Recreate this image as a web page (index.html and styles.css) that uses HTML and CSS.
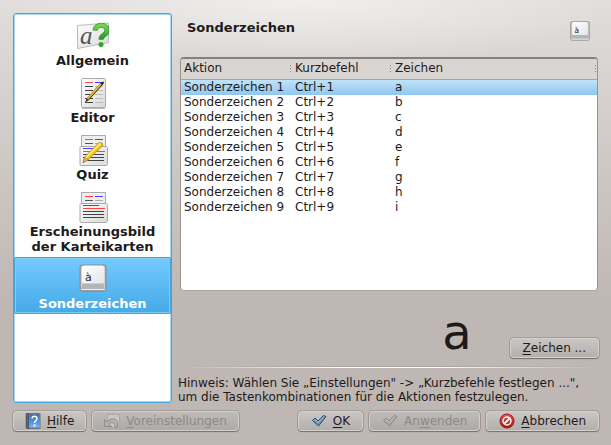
FILE: index.html
```html
<!DOCTYPE html>
<html lang="de">
<head>
<meta charset="utf-8">
<title>Einrichten</title>
<link rel="stylesheet" href="styles.css">
</head>
<body>
<svg class="defs" width="0" height="0" aria-hidden="true">
  <defs>
    <linearGradient id="paper" x2="1" y2="1"><stop stop-color="#fff"/><stop offset="1" stop-color="#d9d9d9"/></linearGradient>
    <linearGradient id="green" x2="0" y2="1"><stop stop-color="#75d353"/><stop offset="1" stop-color="#189b1c"/></linearGradient>
    <linearGradient id="blue" x2="0" y2="1"><stop stop-color="#2468bd"/><stop offset="1" stop-color="#79b5f8"/></linearGradient>
    <linearGradient id="red" x2="0" y2="1"><stop stop-color="#e85a50"/><stop offset="1" stop-color="#a90d0d"/></linearGradient>
    <linearGradient id="keyface" x2="1" y2="1"><stop stop-color="#fff"/><stop offset="1" stop-color="#e4e5e6"/></linearGradient>
    <symbol id="cards" viewBox="0 0 32 32">
      <path d="M4.500 .5h24v13h-24z" fill="#eee" stroke="#aaa"/>
      <path d="M8 4.500h8" stroke="#f44"/><path d="M18 4.500h8" stroke="#44f"/>
      <path d="M8 8.500h8" stroke="#555"/><path d="M18 8.500h8" stroke="#aaa"/>
      <path d="M3.500 11.500h26l1 1v17l-1 1h-26l-.5-1v-17z" fill="url(#paper)" stroke="#aaa"/>
      <path d="M6 13.500h16" stroke="#44e"/><path d="M6 16.500h22" stroke="#f44"/>
      <path d="M6 19.500h21M6 22.500h21M6 25.500h21" stroke="#444"/>
    </symbol>
    <symbol id="key" viewBox="0 0 28 28">
      <rect x="1" y="1" width="26" height="26" rx="2" fill="#a8aaac" stroke="#8a8a8a"/>
      <path d="M2 26V3l1-1h22l1 1v23z" fill="#d2d4d6"/>
      <path d="M4 19h20l2 6H2z" fill="#b0b5ba"/>
      <rect x="3" y="1.500" width="22" height="18" rx="2" fill="url(#keyface)"/>
      <path d="M2 25.500h24" stroke="#eee"/>
      <text x="6" y="17" font-family="DejaVu Sans" font-size="11" font-weight="normal" fill="#222">à</text>
    </symbol>
    <symbol id="check" viewBox="0 0 16 16">
      <path d="M1.500 7.500 4 5l3 3 5.500-5.500L15 3.500 7.500 13z" stroke-linejoin="round"/>
      <path d="M3 7.500l1-1 3 3 6-6" fill="none" class="shine"/>
    </symbol>
  </defs>
</svg>
<main class="main">
  <nav class="nav">
    <a class="item" href="#allgemein">
      <svg class="icon" viewBox="0 0 32 32" aria-hidden="true">
        <path d="M.5 4.500 31.500 2v19.500L.5 27.500z" fill="url(#paper)" stroke="#bbb"/>
        <text x="3" y="23" font-family="Liberation Serif" font-style="italic" font-weight="normal" font-size="25" fill="#555">a</text>
        <path d="M18 9.500c1-7 12-7 12 0 0 5-6 4-6 9" fill="none" stroke="#278d20" stroke-width="5"/>
        <path d="M18 9.500c1-7 12-7 12 0 0 5-6 4-6 9" fill="none" stroke="url(#green)" stroke-width="4"/>
        <circle cx="24" cy="23.500" r="2.500" fill="#2ba52b"/>
      </svg>
      <span>Allgemein</span>
    </a>
    <a class="item" href="#editor">
      <svg class="icon" viewBox="0 0 32 32" aria-hidden="true">
        <rect x="4.500" y=".5" width="24" height="29" rx="1" fill="url(#paper)" stroke="#aaa"/>
        <path d="M5 30.500h23" stroke="#bbb"/>
        <path d="M8 4.500h8" stroke="#f44"/><path d="M18 4.500h8" stroke="#44e"/>
        <path d="M8 8.500h8M8 12.500h8M8 16.500h8M8 20.500h8M8 24.500h8" stroke="#444"/>
        <path d="M18 8.500h8M18 12.500h8M18 16.500h8M18 20.500h8M18 24.500h8" stroke="#bbb"/>
        <path d="M8 24.500 10 20 24 4.500l2.500-1 .5 1-1 2L12 22z" fill="#2b2613"/>
        <path d="M10.500 21 24 6" stroke="#e3b63c" stroke-width="2"/>
      </svg>
      <span>Editor</span>
    </a>
    <a class="item" href="#quiz">
      <svg class="icon" viewBox="0 0 32 32" aria-hidden="true">
        <use href="#cards"/>
        <path d="M6 27.500 7.500 22 22 7.500q3-1 4 3L11 25z" fill="#f3bd18" stroke="#b9820c" stroke-width=".7"/>
        <path d="M9 22.500 23.500 8.500" stroke="#ffe95c" stroke-width="2"/>
        <path d="M6 27.500 7.500 22l3.500 3z" fill="#d8b78e" stroke="#8a6a44" stroke-width=".5"/>
      </svg>
      <span>Quiz</span>
    </a>
    <a class="item" href="#karten">
      <svg class="icon" viewBox="0 0 32 32" aria-hidden="true"><use href="#cards"/></svg>
      <span>Erscheinungsbild<br>der Karteikarten</span>
    </a>
    <a class="item selected" href="#sonderzeichen" aria-current="page">
      <svg class="icon keycap" viewBox="0 0 28 28" aria-hidden="true"><use href="#key"/></svg>
      <span>Sonderzeichen</span>
    </a>
  </nav>
  <section class="page">
    <header class="head">
      <h1>Sonderzeichen</h1>
      <svg class="headkey" viewBox="0 0 28 28" aria-hidden="true"><use href="#key"/></svg>
    </header>
    <div class="frame">
      <table>
        <thead><tr><th class="action">Aktion</th><th class="shortcut">Kurzbefehl</th><th>Zeichen</th></tr></thead>
        <tbody>
          <tr class="current"><td>Sonderzeichen 1</td><td>Ctrl+1</td><td>a</td></tr>
          <tr><td>Sonderzeichen 2</td><td>Ctrl+2</td><td>b</td></tr>
          <tr><td>Sonderzeichen 3</td><td>Ctrl+3</td><td>c</td></tr>
          <tr><td>Sonderzeichen 4</td><td>Ctrl+4</td><td>d</td></tr>
          <tr><td>Sonderzeichen 5</td><td>Ctrl+5</td><td>e</td></tr>
          <tr><td>Sonderzeichen 6</td><td>Ctrl+6</td><td>f</td></tr>
          <tr><td>Sonderzeichen 7</td><td>Ctrl+7</td><td>g</td></tr>
          <tr><td>Sonderzeichen 8</td><td>Ctrl+8</td><td>h</td></tr>
          <tr><td>Sonderzeichen 9</td><td>Ctrl+9</td><td>i</td></tr>
        </tbody>
      </table>
    </div>
    <div class="choose">
      <output class="preview">a</output>
      <button type="button"><span><u>Z</u>eichen ...</span></button>
    </div>
    <hr>
    <p class="hint">Hinweis: Wählen Sie „Einstellungen" -&gt; „Kurzbefehle festlegen ...",<br>um die Tastenkombinationen für die Aktionen festzulegen.</p>
  </section>
</main>
<footer class="buttons">
  <button type="button">
    <svg class="small" viewBox="0 0 16 16" aria-hidden="true">
      <path d="M1 0h14v16H2L1 15z" fill="#17283f"/><path d="M4 1h11v14H4z" fill="url(#blue)"/><path d="M2.500 1v14" stroke="#4c6788"/>
      <path d="M7 5.500c0-3 5-3 5 0 0 2-2.500 2-2.500 4.500" fill="none" stroke="#fff" stroke-width="1.500"/><path d="M8.500 11.500h2v2h-2z" fill="#fff" stroke="none"/>
    </svg>
    <span><u>H</u>ilfe</span>
  </button>
  <button type="button" disabled>
    <svg class="small" viewBox="0 0 16 16" aria-hidden="true">
      <path d="M3.500 1.500h12v9l-3 4h-9z" fill="#c9c7c5" stroke="#aaa8a6"/>
      <path d="M.5 6.500v7h7L5 11c3-3 6-1 6 3l2 .5c3-9-5-11-10-5.500z" fill="#b5b3b1" stroke="#8f8d8b"/>
    </svg>
    <span><u>V</u>oreinstellungen</span>
  </button>
  <span class="space"></span>
  <button type="button" class="ok"><svg class="small" viewBox="0 0 16 16" aria-hidden="true"><use href="#check"/></svg><span><u>O</u>K</span></button>
  <button type="button" disabled><svg class="small" viewBox="0 0 16 16" aria-hidden="true"><use href="#check"/></svg><span>An<u>w</u>enden</span></button>
  <button type="button">
    <svg class="small" viewBox="0 0 16 16" aria-hidden="true">
      <circle cx="8" cy="8" r="7" fill="url(#red)" stroke="#a01515"/>
      <circle cx="8" cy="8" r="4" fill="none" stroke="#eee" stroke-width="1.500"/><path d="m5 11 6-6" stroke="#eee" stroke-width="2"/>
    </svg>
    <span><u>A</u>bbrechen</span>
  </button>
</footer>
</body>
</html>
```
FILE: styles.css
```css
* { box-sizing: border-box; }

body {
  margin: 0;
  min-height: 100vh;
  padding: 13px 12px 14px 13px;
  display: flex;
  flex-direction: column;
  gap: 8px;
  font: 12px/15px "DejaVu Sans", sans-serif;
  color: #1e1a1a;
  background:
    radial-gradient(ellipse 320px 64px at 50% 0, #f0efee, rgba(240, 239, 238, 0)),
    linear-gradient(#e0dddb, #bfb7b3 300px);
}

.defs { position: absolute; }

.main {
  flex: 1;
  display: flex;
  gap: 6px;
}

.nav {
  width: 159px;
  border: 1px solid #43a5dc;
  border-radius: 3px;
  background: #fff;
  box-shadow: inset 0 0 0 1px #a5d9f5;
}

.item {
  display: flex;
  flex-direction: column;
  align-items: center;
  padding: 7px 0 3px;
  color: #1e1a1a;
  font-size: 13px;
  font-weight: bold;
  text-align: center;
  text-decoration: none;
}

.item.selected {
  color: #fff;
  background: linear-gradient(#76caff, #43a9e6);
  border-radius: 2px;
  box-shadow: inset 0 0 0 1px #43a5dc, inset 0 0 0 2px #7fcbf8;
}

.icon {
  width: 32px;
  height: 32px;
}

.keycap { padding: 0 2px 4px; }

.page {
  flex: 1;
  min-width: 0;
  display: flex;
  flex-direction: column;
}

.head {
  display: flex;
  justify-content: space-between;
  padding: 7px 9px 0;
  height: 44px;
}

h1 {
  margin: 0;
  font-size: 13px;
  line-height: 15px;
}

.headkey {
  width: 20px;
  height: 20px;
  margin-top: 1px;
}

.frame {
  flex: 1;
  margin: 0 1px 0 2px;
  border: 1px solid #99928e;
  border-top: 2px solid #85807c;
  border-bottom-color: #aaa39f;
  border-radius: 4px;
  background: #fff;
  overflow: hidden;
}

table {
  width: 100%;
  table-layout: fixed;
  border-collapse: collapse;
}

.action { width: 111px; }
.shortcut { width: 100px; }

th, td {
  padding: 0 0 0 3px;
  height: 15px;
  text-align: left;
  font-weight: normal;
  white-space: nowrap;
}

th {
  height: 20px;
  background:
    linear-gradient(#8b8683, #8b8683) right 1px top 6px / 1px 1px no-repeat,
    linear-gradient(#8b8683, #8b8683) right 1px top 9px / 1px 1px no-repeat,
    linear-gradient(#8b8683, #8b8683) right 1px top 12px / 1px 1px no-repeat,
    #d9d5d3;
  border-bottom: 1px solid #aaa39f;
}

.current { background: linear-gradient(#c4e4f9, #8fc8ef); }

.choose {
  display: flex;
  align-items: flex-end;
  justify-content: flex-end;
  gap: 38px;
  height: 67px;
}

.preview {
  font-size: 48px;
  line-height: 52px;
}

hr {
  width: 100%;
  height: 2px;
  margin: 8px 0;
  border: 0;
  background:
    linear-gradient(90deg, transparent, #fff 40%, #fff 60%, transparent) bottom / 100% 1px no-repeat,
    linear-gradient(90deg, transparent, #aaa39f 40%, #aaa39f 60%, transparent) top / 100% 1px no-repeat;
}

.hint {
  margin: 0 0 -1px;
  line-height: 14px;
  white-space: nowrap;
}

.buttons {
  display: flex;
  gap: 6px;
}

.space { flex: 1; }

button {
  display: flex;
  align-items: center;
  gap: 6px;
  height: 20px;
  padding: 0 11px;
  border: 1px solid #d3d0ce;
  border-radius: 4px;
  background: linear-gradient(#c9c6c3, #b3afac);
  box-shadow: 0 1px 1px #77716e, 0 0 0 1px #a39c98;
  color: #1e1a1a;
  font: inherit;
  white-space: nowrap;
}

.space ~ button, .choose button { padding: 0 12px; }

button:disabled {
  color: #8d8987;
  background: linear-gradient(#bfbbb8, #aeaaa7);
}

button u { text-underline-offset: 2px; }

.small {
  width: 16px;
  height: 16px;
  flex: none;
  fill: #aaa8a6;
  stroke: #8b8987;
}

.ok .small {
  fill: #6796bd;
  stroke: #2d4b66;
}

.shine { stroke: #c3c1bf; }
.ok .shine { stroke: #8fb7d9; }

svg text { stroke: none; }
```
